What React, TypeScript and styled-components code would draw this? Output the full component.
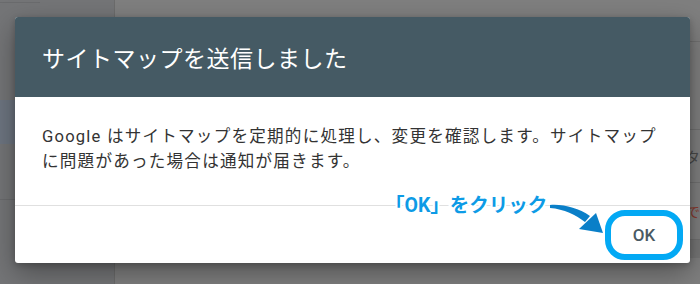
import React from "react";
import styled, { createGlobalStyle } from "styled-components";

const GlobalStyle = createGlobalStyle`
  html, body {
    margin: 0;
    padding: 0;
    background: #7e7e7e;
  }
  * { box-sizing: border-box; }
`;

const Page = styled.div`
  position: relative;
  width: 700px;
  height: 284px;
  display: flex;
  overflow: hidden;
  font-family: Roboto, "Noto Sans CJK JP", "Noto Sans", sans-serif;
`;

const Sidebar = styled.div`
  width: 115px;
  flex-shrink: 0;
  background: #747577;
  border-right: 1px solid #6c6c6c;
  display: flex;
  flex-direction: column;
`;

const SideLine = styled.div<{ $top: number; $width?: number }>`
  margin-top: ${(p) => p.$top}px;
  height: 1px;
  width: ${(p) => (p.$width ? `${p.$width}px` : "100%")};
  background: #6a6b6d;
`;

const SideItem = styled.div`
  margin-top: 97px;
  height: 44px;
  width: 100%;
  background: #6d7580;
  border-radius: 0 22px 22px 0;
`;

const Main = styled.div`
  flex: 1;
  background: #7f7f7f;
  display: flex;
  flex-direction: column;
  align-items: stretch;
`;

const MainRow = styled.div<{ $h: number; $line?: boolean; $bg?: string }>`
  height: ${(p) => p.$h}px;
  border-bottom: ${(p) => (p.$line ? "1px solid #717171" : "none")};
  background: ${(p) => p.$bg || "transparent"};
  display: flex;
  justify-content: flex-end;
  align-items: center;
  font-size: 15px;
  color: #4a4a4a;
  overflow: hidden;
  white-space: nowrap;
`;

const RedText = styled.span`
  color: #8a3a2f;
  font-size: 14px;
`;

const Dialog = styled.div`
  position: absolute;
  left: 15px;
  top: 17px;
  width: 675px;
  height: 246px;
  background: #fff;
  border-radius: 3px;
  box-shadow: 0 10px 28px rgba(0, 0, 0, 0.35), 0 2px 6px rgba(0, 0, 0, 0.2);
  display: flex;
  flex-direction: column;
`;

const Header = styled.div`
  height: 80px;
  background: #455a64;
  border-radius: 3px 3px 0 0;
  display: flex;
  align-items: center;
  padding-left: 27px;
`;

const Title = styled.h2`
  margin: 0;
  font-weight: 400;
  font-size: 23px;
  color: #ffffff;
  letter-spacing: 0.5px;
`;

const Body = styled.div`
  height: 108px;
  padding: 27px 27px 0 27px;
`;

const BodyText = styled.p`
  margin: 0;
  font-size: 16.6px;
  line-height: 25px;
  letter-spacing: 1.2px;
  color: #333333;
`;

const Footer = styled.div`
  position: relative;
  flex: 1;
  border-top: 1px solid #e0e0e0;
  display: flex;
  justify-content: flex-end;
  align-items: center;
  padding-right: 7px;
`;

const Ring = styled.div`
  width: 78px;
  height: 50px;
  border: 6px solid #03a9f4;
  border-radius: 20px;
  display: flex;
  align-items: center;
  justify-content: center;
`;

const OkButton = styled.button`
  border: none;
  background: transparent;
  font-family: Roboto, sans-serif;
  font-weight: 500;
  font-size: 17px;
  color: #4a5a63;
  padding: 0;
  cursor: pointer;
`;

const Callout = styled.div`
  position: absolute;
  left: 370px;
  top: -17px;
  font-size: 19.5px;
  font-weight: 700;
  color: #0d9be6;
  white-space: nowrap;
  -webkit-text-stroke: 4px #fff;
  paint-order: stroke fill;
`;

const Arrow = styled.svg`
  position: absolute;
  left: 535px;
  top: -5px;
  overflow: visible;
`;

export default function App() {
  return (
    <>
      <GlobalStyle />
      <Page>
        <Sidebar>
          <SideLine $top={2} $width={40} />
          <SideItem />
          <SideLine $top={55} />
        </Sidebar>
        <Main>
          <MainRow $h={42} $line />
          <MainRow $h={88} $line />
          <MainRow $h={53} $line>タ</MainRow>
          <MainRow $h={57} $line>
            <RedText>で</RedText>
          </MainRow>
          <MainRow $h={18} $bg="#767676" />
        </Main>

        <Dialog>
          <Header>
            <Title>サイトマップを送信しました</Title>
          </Header>
          <Body>
            <BodyText>
              Google はサイトマップを定期的に処理し、変更を確認します。サイトマップに問題があった場合は通知が届きます。
            </BodyText>
          </Body>
          <Footer>
            <Callout>「OK」をクリック</Callout>
            <Arrow width="56" height="36" viewBox="0 0 56 36">
              <path
                d="M0 4 C 14 3, 28 7, 40 15 L 35 21 C 26 14, 14 8, 0 7 Z"
                fill="#0a7fc8"
              />
              <path d="M29 28 L 46 12 L 53 32 Z" fill="#0a7fc8" />
            </Arrow>
            <Ring>
              <OkButton>OK</OkButton>
            </Ring>
          </Footer>
        </Dialog>
      </Page>
    </>
  );
}
